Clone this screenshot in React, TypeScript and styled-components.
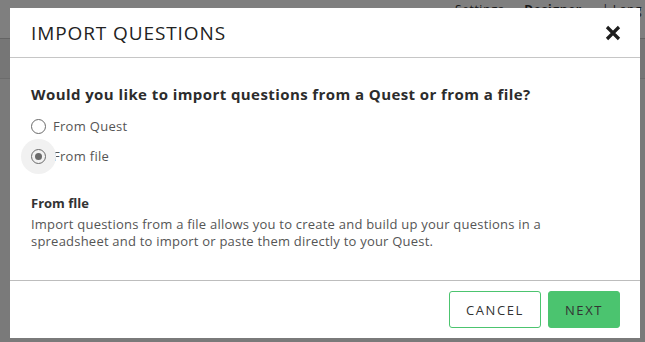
import styled, {createGlobalStyle} from "styled-components";

// 스타일
const GlobalStyle = createGlobalStyle`
  html, body {
    margin: 0;
    padding: 0;
    width: 645px;
    height: 342px;
    overflow: hidden;
  }
  body {
    font-family: "Open Sans", "Liberation Sans", sans-serif;
  }
`;

const Page = styled.div`
  position: relative;
  width: 645px;
  height: 342px;
  background: #f4f4f4;
  display: flex;
  flex-direction: column;
`;
const TopBar = styled.header`
  height: 37px;
  background: #ffffff;
  border-bottom: 1px solid #c8c8c8;
  display: flex;
  align-items: flex-start;
  gap: 20px;
  padding: 1px 0 0 455px;
  font-size: 12px;
  letter-spacing: 0.6px;
  color: #333;
  overflow: hidden;
`;
const NavItem = styled.span<{ $bold?: boolean }>`
  font-weight: ${props => (props.$bold ? 700 : 400)};
  white-space: nowrap;
`;
const ToolBar = styled.div`
  height: 39px;
  background: #ececec;
  border-bottom: 1px solid #d8d8d8;
`;
const Overlay = styled.div`
  position: absolute;
  inset: 0;
  background: rgba(0, 0, 0, 0.5);
`;
const Modal = styled.section`
  position: absolute;
  left: 10px;
  top: 8px;
  width: 630px;
  height: 330px;
  background: #fff;
  display: flex;
  flex-direction: column;
`;
const ModalHeader = styled.div`
  height: 49px;
  border-bottom: 1px solid #c6c6c6;
  display: flex;
  align-items: center;
  justify-content: space-between;
  padding: 0 19px 0 21px;
`;
const Title = styled.h2`
  margin: 0;
  font-size: 19px;
  font-weight: 400;
  letter-spacing: 0.9px;
  color: #222;
`;
const CloseButton = styled.button`
  border: 0;
  background: none;
  padding: 0;
  width: 16px;
  height: 16px;
  display: flex;
  cursor: pointer;
`;
const Body = styled.div`
  flex: 1;
  padding: 26px 21px 0;
`;
const Question = styled.h3`
  margin: 0 0 7px;
  font-size: 15px;
  font-weight: 700;
  letter-spacing: 0.42px;
  color: #2c2c2c;
`;
const Options = styled.div`
  display: flex;
  flex-direction: column;
`;
const Option = styled.label`
  display: flex;
  align-items: center;
  gap: 7px;
  height: 30px;
  font-size: 13px;
  letter-spacing: 0.3px;
  color: #555;
`;
const RadioWrap = styled.span<{ $checked?: boolean }>`
  position: relative;
  width: 15px;
  height: 15px;
  display: flex;
  align-items: center;
  justify-content: center;

  &::before {
    content: "";
    position: absolute;
    left: -10px;
    top: -10px;
    width: 35px;
    height: 35px;
    border-radius: 50%;
    background: ${props => (props.$checked ? "#f1f1f1" : "transparent")};
  }
`;
const RadioCircle = styled.span<{ $checked?: boolean }>`
  position: relative;
  box-sizing: border-box;
  width: 15px;
  height: 15px;
  border-radius: 50%;
  border: 1.5px solid #6a6a6a;
  display: flex;
  align-items: center;
  justify-content: center;

  &::after {
    content: "";
    width: 7px;
    height: 7px;
    border-radius: 50%;
    background: ${props => (props.$checked ? "#6a6a6a" : "transparent")};
  }
`;
const InfoTitle = styled.h4`
  margin: 23px 0 4px;
  font-size: 13px;
  font-weight: 700;
  color: #333;
`;
const InfoText = styled.p`
  margin: 0;
  font-size: 13px;
  line-height: 17px;
  letter-spacing: 0.22px;
  color: #555;
  max-width: 570px;
`;
const Footer = styled.div`
  height: 57px;
  border-top: 1px solid #bdbdbd;
  display: flex;
  justify-content: flex-end;
  align-items: center;
  gap: 7px;
  padding: 0 20px;
`;
const Button = styled.button<{ $primary?: boolean }>`
  height: 37px;
  padding: 0;
  width: ${props => (props.$primary ? "72px" : "92px")};
  border-radius: 3px;
  border: 1px solid #4cc46f;
  background: ${props => (props.$primary ? "#4bc46f" : "#fff")};
  font-family: "Open Sans", "Liberation Sans", sans-serif;
  font-size: 13px;
  letter-spacing: 1.6px;
  color: #333;
  cursor: pointer;
`;

// 기능
const options = [
  {id: "quest", label: "From Quest", checked: false},
  {id: "file", label: "From file", checked: true},
];

function App() {
  return (
    <>
      <GlobalStyle />
      <Page>
        <TopBar>
          <NavItem>Settings</NavItem>
          <NavItem $bold>Designer</NavItem>
          <NavItem>| Lang</NavItem>
        </TopBar>
        <ToolBar />
        <Overlay />
        <Modal>
          <ModalHeader>
            <Title>IMPORT QUESTIONS</Title>
            <CloseButton aria-label="Close">
              <svg width="16" height="16" viewBox="0 0 16 16">
                <path d="M2 2 L14 14 M14 2 L2 14" stroke="#1e1e1e" strokeWidth="3.2" strokeLinecap="butt" />
              </svg>
            </CloseButton>
          </ModalHeader>
          <Body>
            <Question>Would you like to import questions from a Quest or from a file?</Question>
            <Options>
              {options.map(option => (
                <Option key={option.id}>
                  <RadioWrap $checked={option.checked}>
                    <RadioCircle $checked={option.checked} />
                  </RadioWrap>
                  {option.label}
                </Option>
              ))}
            </Options>
            <InfoTitle>From flle</InfoTitle>
            <InfoText>
              Import questions from a file allows you to create and build up your questions in a
              spreadsheet and to import or paste them directly to your Quest.
            </InfoText>
          </Body>
          <Footer>
            <Button>CANCEL</Button>
            <Button $primary>NEXT</Button>
          </Footer>
        </Modal>
      </Page>
    </>
  );
}

export default App;
